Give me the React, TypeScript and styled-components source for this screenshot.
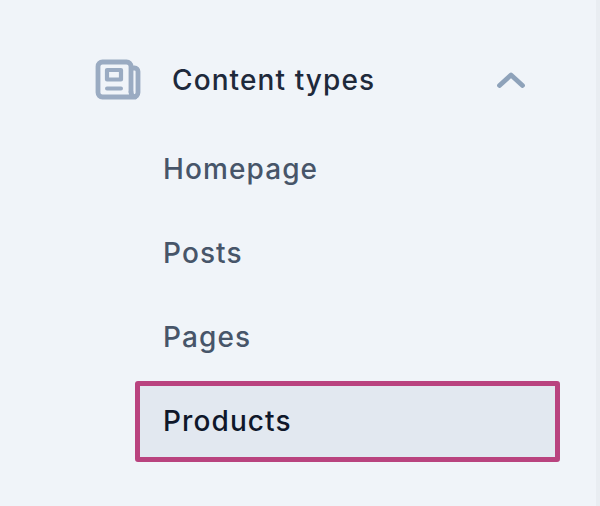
import * as React from 'react';
import styled, { createGlobalStyle } from 'styled-components';

const items = ['Homepage', 'Posts', 'Pages', 'Products'];
const ACTIVE = 'Products';

const GlobalStyle = createGlobalStyle`
  html,
  body {
    margin: 0;
    padding: 0;
    background: #e9edf2;
  }
`;

const NewspaperIcon = () => (
  <svg width="48" height="42" viewBox="0 0 48 42" fill="none" stroke="#9aabc2" strokeWidth="4.8" strokeLinejoin="round" strokeLinecap="round">
    <path d="M37 33V7.5A4.5 4.5 0 0 0 32.5 3H8.5A4.5 4.5 0 0 0 4 7.5V33.5A4.5 4.5 0 0 0 8.5 38H39.5A4.5 4.5 0 0 0 44 33.5V12.5A3.5 3.5 0 0 0 40.5 9H37" />
    <path d="M37 33A5 5 0 0 0 41 38" />
    <path d="M13 11H27V20.5H13Z" strokeWidth="4.2" />
    <path d="M13 29.5H27" strokeWidth="4" />
  </svg>
);

const ChevronIcon = () => (
  <svg width="28" height="16" viewBox="0 0 28 16" fill="none" stroke="#8ea2ba" strokeWidth="4.8" strokeLinecap="round" strokeLinejoin="round">
    <path d="M2.5 13.5L14 3L25.5 13.5" />
  </svg>
);

export default function App() {
  return (
    <>
      <GlobalStyle />
      <Sidebar>
        <Header>
          <IconSlot>
            <NewspaperIcon />
          </IconSlot>
          <Title>Content types</Title>
          <ChevronSlot>
            <ChevronIcon />
          </ChevronSlot>
        </Header>
        <Menu>
          {items.map((item) => (
            <MenuItem key={item} $active={item === ACTIVE}>
              {item}
            </MenuItem>
          ))}
        </Menu>
      </Sidebar>
    </>
  );
}

const Sidebar = styled.div`
  width: 596px;
  height: 506px;
  box-sizing: border-box;
  padding-top: 59px;
  overflow: hidden;
  background: #f0f4f9;
  font-family: Inter, 'Liberation Sans', sans-serif;
`;

const Header = styled.div`
  display: flex;
  align-items: center;
  height: 42px;
  padding-left: 94px;
`;

const IconSlot = styled.span`
  display: flex;
  width: 78px;
`;

const Title = styled.span`
  flex: 1;
  font-size: 28px;
  font-weight: 500;
  letter-spacing: 1.1px;
  color: #1e293b;
`;

const ChevronSlot = styled.span`
  display: flex;
  margin-right: 71px;
`;

const Menu = styled.ul`
  display: flex;
  flex-direction: column;
  gap: 3px;
  margin: 28px 36px 0 135px;
  padding: 0;
  list-style: none;
`;

const MenuItem = styled.li<{ $active?: boolean }>`
  display: flex;
  align-items: center;
  height: 81px;
  box-sizing: border-box;
  padding: 0 0 2px 23px;
  border: 5px solid ${(p) => (p.$active ? '#b9437f' : 'transparent')};
  border-radius: 3px;
  background: ${(p) => (p.$active ? '#e2e8f0' : 'transparent')};
  font-size: 28px;
  font-weight: 500;
  letter-spacing: 1.1px;
  color: ${(p) => (p.$active ? '#0f172a' : '#475569')};
`;
